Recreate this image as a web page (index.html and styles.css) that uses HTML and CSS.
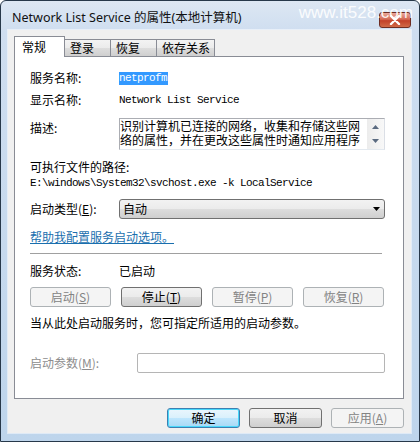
FILE: index.html
```html
<!DOCTYPE html>
<html lang="zh-CN">
<head>
  <meta charset="UTF-8" />
  <title>Network List Service 的属性</title>
  <link rel="stylesheet" href="styles.css">
</head>
<body>

  <div class="window">
    <div class="titlebar">
      <span class="title">Network List Service 的属性(本地计算机)</span>
      <span class="close">
        <svg width="12" height="10" viewBox="0 0 12 10">
          <path d="M2 1 L10 9 M10 1 L2 9" stroke="#fff" stroke-width="2.4" stroke-linecap="round" />
        </svg>
      </span>
      <span class="watermark">www.it528.com</span>
    </div>

    <div class="client">
      <div class="tabs">
        <div class="tab active">常规</div>
        <div class="tab">登录</div>
        <div class="tab">恢复</div>
        <div class="tab">依存关系</div>
      </div>

      <div class="panel">
        <div class="row">
          <span class="label">服务名称:</span>
          <span class="mono"><span class="sel">netprofm</span></span>
        </div>

        <div class="row gap-6">
          <span class="label">显示名称:</span>
          <span class="mono">Network List Service</span>
        </div>

        <div class="row desc gap-10">
          <span class="label">描述:</span>
          <div class="textbox">
            <div class="textbox-text">识别计算机已连接的网络，收集和存储这些网<br>络的属性，并在更改这些属性时通知应用程序</div>
            <div class="scrollbar">
              <svg width="7" height="4" viewBox="0 0 7 4"><path d="M0 4 L3.5 0 L7 4 Z" fill="#5a6a80" /></svg>
              <svg width="7" height="4" viewBox="0 0 7 4"><path d="M0 0 L7 0 L3.5 4 Z" fill="#5a6a80" /></svg>
            </div>
          </div>
        </div>

        <div class="row gap-9">
          <span>可执行文件的路径:</span>
        </div>
        <div class="row">
          <span class="mono">E:\windows\System32\svchost.exe -k LocalService</span>
        </div>

        <div class="row tall gap-8">
          <span class="label">启动类型(<u>E</u>):</span>
          <div class="select">
            <span>自动</span>
            <svg width="7" height="4" viewBox="0 0 7 4"><path d="M0 0 L7 0 L3.5 4 Z" fill="#000" /></svg>
          </div>
        </div>

        <div class="row gap-10">
          <a class="link" href="#">帮助我配置服务启动选项。</a>
        </div>

        <div class="separator"></div>

        <div class="row gap-9">
          <span class="label">服务状态:</span>
          <span>已启动</span>
        </div>

        <div class="actions">
          <button class="btn" disabled>启动(<u>S</u>)</button>
          <button class="btn">停止(<u>T</u>)</button>
          <button class="btn" disabled>暂停(<u>P</u>)</button>
          <button class="btn" disabled>恢复(<u>R</u>)</button>
        </div>

        <div class="row gap-8">
          <span>当从此处启动服务时，您可指定所适用的启动参数。</span>
        </div>

        <div class="row tall params">
          <span class="label wide muted">启动参数(<u>M</u>):</span>
          <div class="input"></div>
        </div>
      </div>

      <div class="footer">
        <button class="btn default">确定</button>
        <button class="btn">取消</button>
        <button class="btn" disabled>应用(<u>A</u>)</button>
      </div>
    </div>
  </div>

</body>
</html>
```

FILE: styles.css
```css
body {
  margin: 0;
  font-family: "Noto Sans CJK SC", "Noto Sans", sans-serif;
  font-size: 12px;
  color: #000;
  background: #fff;
}

.window {
  width: 420px;
  height: 442px;
  box-sizing: border-box;
  border: 1px solid #27384a;
  border-radius: 6px 6px 0 0;
  padding: 0 8px 8px 7px;
  background: linear-gradient(to bottom, #dde7f3 0, #cfdef0 30px, #bed5ec 100%);
  display: flex;
  flex-direction: column;
}

.titlebar {
  position: relative;
  height: 29px;
  display: flex;
  align-items: flex-start;
  justify-content: space-between;
}

.title {
  margin: 10px 0 0 4px;
  line-height: 14px;
  font-family: "Noto Sans", "Noto Sans CJK SC", sans-serif;
  font-size: 12.5px;
  color: #111;
}

.close {
  margin-top: 11px;
  width: 32px;
  height: 16px;
  box-sizing: border-box;
  border: 1px solid #6e2d23;
  border-radius: 3px;
  background: linear-gradient(to bottom, #e9a99a 0, #d46a55 45%, #c2412a 55%, #d06a48 100%);
  display: flex;
  align-items: center;
  justify-content: center;
}

.watermark {
  position: absolute;
  right: -2px;
  top: 1px;
  font-family: "Liberation Sans", Arial, sans-serif;
  font-size: 17px;
  line-height: 22px;
  color: rgba(255, 255, 255, 0.9);
}

.client {
  flex: 1;
  background: #f0f0f0;
  box-shadow: 0 0 0 1px rgba(255, 255, 255, 0.5);
  display: flex;
  flex-direction: column;
}

/* tabs */

.tabs {
  display: flex;
  align-items: flex-end;
  margin: 6px 0 0 6px;
  height: 20px;
}

.tab {
  height: 17px;
  box-sizing: border-box;
  min-width: 47px;
  padding: 0 4px 0 5px;
  margin-left: -1px;
  border: 1px solid #898c95;
  border-bottom: none;
  background: linear-gradient(to bottom, #f3f3f3 0, #ebebeb 50%, #dddddd 51%, #cfcfcf 100%);
  line-height: 16px;
}

.tab.active {
  position: relative;
  z-index: 1;
  height: 21px;
  width: 51px;
  margin: 0 0 -1px 0;
  padding-left: 7px;
  background: #fff;
  line-height: 19px;
}

.panel {
  margin: 0 7px 0 6px;
  height: 343px;
  box-sizing: border-box;
  border: 1px solid #898c95;
  background: #fff;
  padding: 13px 18px 0 15px;
}

/* rows */

.row {
  display: flex;
  align-items: center;
  height: 16px;
  line-height: 16px;
}

.row.tall {
  height: 20px;
}

.gap-6 { margin-top: 6px; }
.gap-8 { margin-top: 8px; }
.gap-9 { margin-top: 9px; }
.gap-10 { margin-top: 10px; }

.label {
  width: 89px;
  flex: none;
}

.label.wide {
  width: 107px;
}

.muted {
  color: #8d8d8d;
}

.mono {
  font-family: "Liberation Mono", "DejaVu Sans Mono", monospace;
  font-size: 11px;
  letter-spacing: -0.6px;
  white-space: pre;
}

.sel {
  display: inline-block;
  background: #3399ff;
  color: #fff;
  line-height: 13px;
  padding-right: 1px;
}

.desc {
  height: 32px;
  align-items: flex-start;
}

.desc .label {
  line-height: 20px;
}

.textbox {
  flex: 1;
  height: 32px;
  box-sizing: border-box;
  border: 1px solid #abadb3;
  border-right-color: #dbdfe6;
  border-bottom-color: #e3e9ef;
  display: flex;
}

.textbox-text {
  flex: 1;
  font-size: 12px;
  line-height: 14px;
  white-space: nowrap;
}

.scrollbar {
  width: 17px;
  background: linear-gradient(to right, #ececec, #f8f8f8);
  display: flex;
  flex-direction: column;
  justify-content: space-between;
  align-items: center;
  padding: 6px 0 6px;
  box-sizing: border-box;
}

.select {
  flex: 1;
  height: 20px;
  box-sizing: border-box;
  border: 1px solid #707070;
  border-radius: 3px;
  background: linear-gradient(to bottom, #f2f2f2 0, #ebebeb 50%, #dddddd 51%, #cfcfcf 100%);
  display: flex;
  align-items: center;
  justify-content: space-between;
  padding: 0 4px 0 3px;
}

.link {
  color: #1a6fae;
  text-decoration: underline;
}

.separator {
  margin: 8px 3px 0 0;
  border-top: 1px solid #a0a0a0;
}

.actions {
  margin-top: 8px;
  display: grid;
  grid-template-columns: repeat(4, 1fr);
  gap: 10px;
  margin-right: 1px;
}

.params {
  margin-top: 22px;
}

.input {
  flex: 1;
  height: 20px;
  box-sizing: border-box;
  border: 1px solid #b5b5b5;
  border-radius: 2px;
  background: #fff;
}

/* buttons */

.btn {
  height: 20px;
  padding: 0;
  font-family: inherit;
  font-size: 12px;
  line-height: 16px;
  color: #000;
  border: 1px solid #707070;
  border-radius: 3px;
  background: linear-gradient(to bottom, #f2f2f2 0, #ebebeb 50%, #dddddd 51%, #cfcfcf 100%);
}

.btn:disabled {
  color: #838383;
  border-color: #adb2b5;
  background: #f4f4f4;
}

.btn.default {
  border-color: #3c7fb1;
  background: linear-gradient(to bottom, #eaf6fd 0, #d9f0fc 50%, #bee6fd 51%, #a7d9f5 100%);
  box-shadow: inset 0 0 0 1px #48d8fb;
}

.footer {
  margin: 9px 7px 0 0;
  display: flex;
  justify-content: flex-end;
  gap: 9px;
}

.footer .btn {
  width: 73px;
}
```
